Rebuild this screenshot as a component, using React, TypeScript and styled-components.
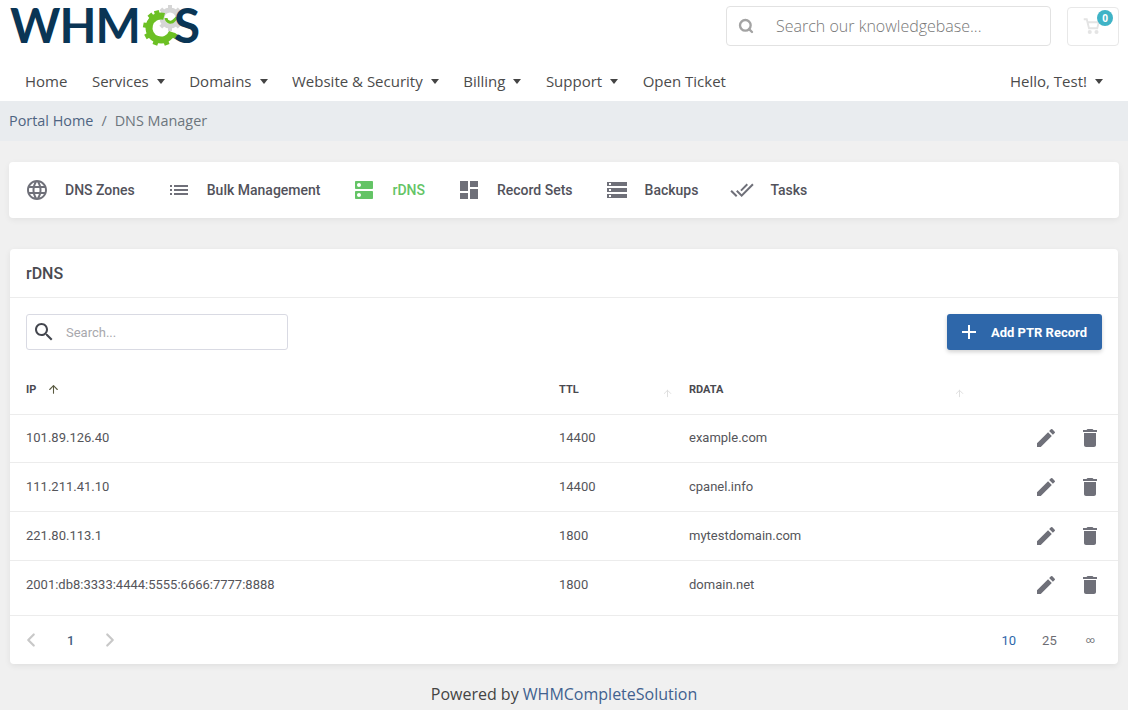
import React from "react";
import styled, { createGlobalStyle } from "styled-components";
import { Search, ArrowUp, ChevronLeft, ChevronRight } from "lucide-react";

const GlobalStyle = createGlobalStyle`
  html, body {
    margin: 0;
    padding: 0;
    background: #f0f0f0;
    font-family: "Open Sans", sans-serif;
    color: #444;
  }
  * { box-sizing: border-box; }
`;

const Page = styled.div`
  width: 1128px;
  height: 710px;
  overflow: hidden;
`;

const Header = styled.header`
  background: #fff;
  height: 101px;
`;

const TopRow = styled.div`
  height: 64px;
  display: flex;
  align-items: flex-start;
  padding: 6px 9px 0 10px;
`;

const Logo = styled.div`
  display: flex;
  align-items: center;
  height: 48px;
  margin-top: -5px;
  font-family: "Lato", sans-serif;
  font-size: 48px;
  font-weight: 700;
  color: #0a3555;
  line-height: 48px;
  letter-spacing: -1px;
`;

const LogoGear = styled.svg`
  width: 42px;
  height: 42px;
  flex: none;
`;

const LogoLetter = styled.span`
  margin-left: -8px;
`;

const KbSearch = styled.div`
  margin-left: auto;
  width: 325px;
  height: 40px;
  border: 1px solid #e2e2e2;
  border-radius: 4px;
  display: flex;
  align-items: center;
  padding-left: 11px;
  font-size: 16px;
  font-weight: 300;
  color: #777;
`;

const KbSearchText = styled.span`
  margin-left: 22px;
`;

const CartButton = styled.div`
  position: relative;
  width: 52px;
  height: 39px;
  margin: 1px 0 0 16px;
  border: 1px solid #e8e8e8;
  border-radius: 4px;
  padding: 9px 0 0 15px;
`;

const CartBadge = styled.span`
  position: absolute;
  top: 2px;
  right: 5px;
  width: 16px;
  height: 16px;
  border-radius: 50%;
  background: #3fb3c6;
  color: #fff;
  font-size: 10px;
  font-weight: 700;
  line-height: 16px;
  text-align: center;
`;

const Nav = styled.nav`
  height: 37px;
  display: flex;
  align-items: center;
  padding: 0 25px 4px 25px;
  gap: 24.5px;
  font-size: 15px;
  color: #4b4b4b;
`;

const NavItem = styled.span<{ $last?: boolean }>`
  display: flex;
  align-items: center;
  gap: 8px;
  margin-left: ${({ $last }) => ($last ? "auto" : "0")};
`;

const Caret = styled.i`
  width: 0;
  height: 0;
  margin-top: 2px;
  border-left: 4.8px solid transparent;
  border-right: 4.8px solid transparent;
  border-top: 5px solid #444;
`;

const Breadcrumb = styled.div`
  height: 40px;
  background: #e9ecef;
  display: flex;
  align-items: center;
  padding: 0 0 2px 9px;
  font-size: 14.4px;
  color: #6c757d;
  gap: 8px;
`;

const CrumbLink = styled.span`
  color: #4f6482;
`;

const Content = styled.main`
  padding: 21px 9px 0;
`;

const TabsCard = styled.div`
  height: 56px;
  background: #fff;
  border-radius: 4px;
  box-shadow: 0 2px 6px rgba(0, 0, 0, 0.06);
  display: flex;
  align-items: center;
  padding-left: 16px;
  gap: 32px;
`;

const Tab = styled.div<{ $active?: boolean }>`
  display: flex;
  align-items: center;
  gap: 16px;
  font-family: "Roboto", sans-serif;
  font-size: 14px;
  font-weight: 500;
  color: ${({ $active }) => ($active ? "#64c466" : "#52525b")};
`;

const MatIcon = styled.svg`
  width: 24px;
  height: 24px;
  display: block;
  flex: none;
  fill: currentColor;
`;

const TabGlyph = styled.span<{ $active?: boolean }>`
  display: flex;
  color: ${({ $active }) => ($active ? "#64c466" : "#6f7079")};
`;

const Card = styled.section`
  margin: 31px 1px 0;
  height: 415px;
  background: #fff;
  border-radius: 4px;
  box-shadow: 0 2px 6px rgba(0, 0, 0, 0.07);
  font-family: "Roboto", sans-serif;
  display: flex;
  flex-direction: column;
`;

const CardHeader = styled.h2`
  margin: 0;
  height: 49px;
  padding: 0 16px;
  border-bottom: 1px solid #ececec;
  display: flex;
  align-items: center;
  font-size: 16px;
  font-weight: 500;
  color: #4a4a50;
`;

const Toolbar = styled.div`
  height: 70px;
  padding: 16px 16px 0;
  display: flex;
  justify-content: space-between;
  align-items: flex-start;
`;

const TableSearch = styled.div`
  width: 262px;
  height: 36px;
  border: 1px solid #d9dae3;
  border-radius: 3px;
  display: flex;
  align-items: center;
  padding-left: 5px;
  gap: 10px;
  font-size: 13px;
  color: #a8a8ad;
`;

const SearchGlyph = styled.span`
  display: flex;
  color: #44474f;
`;

const AddButton = styled.button`
  width: 155px;
  height: 36px;
  border: 0;
  border-radius: 3px;
  background: #2e67aa;
  color: #fff;
  font-family: "Roboto", sans-serif;
  font-size: 13px;
  font-weight: 700;
  display: flex;
  align-items: center;
  padding: 0 0 0 10px;
  gap: 10px;
  box-shadow: 0 2px 4px rgba(0, 0, 0, 0.18);
`;

const Grid = styled.div`
  display: grid;
  grid-template-columns: 533px 130px 1fr 110px;
`;

const HeadRow = styled(Grid)`
  height: 47px;
  padding-left: 16px;
  align-items: center;
  font-size: 11px;
  font-weight: 700;
  color: #4a4a50;
  border-bottom: 1px solid #ececec;
`;

const HeadCell = styled.div`
  display: flex;
  align-items: center;
  position: relative;
  height: 100%;
  gap: 11px;
  padding-bottom: 3px;
`;

const SortGhost = styled.span<{ $right: number }>`
  position: absolute;
  right: ${({ $right }) => $right}px;
  top: 20px;
  color: #dcdcdc;
  display: flex;
`;

const Row = styled(Grid)<{ $plain?: boolean }>`
  height: 49px;
  padding: 0 0 2px 16px;
  align-items: center;
  font-size: 13px;
  color: #55555a;
  border-bottom: ${({ $plain }) => ($plain ? "none" : "1px solid #ececec")};

  ${HeadRow} + & {
    height: 48px;
  }
`;

const Actions = styled.div`
  display: flex;
  justify-content: flex-end;
  align-items: center;
  gap: 20px;
  padding: 1px 16px 0 0;
  color: #6f7079;
`;

const CardFooter = styled.div`
  flex: 1;
  margin-top: 5px;
  border-top: 1px solid #ececec;
  display: flex;
  align-items: center;
  justify-content: space-between;
  padding: 0 23px 0 10px;
  font-size: 13px;
  color: #6d6d72;
`;

const Pager = styled.div`
  display: flex;
  align-items: center;
  color: #c8c8c8;
  gap: 25px;
`;

const PageNumber = styled.span`
  color: #45607f;
  font-weight: 500;
`;

const PageSizes = styled.div`
  display: flex;
  align-items: center;
  gap: 26px;
`;

const PageSize = styled.span<{ $active?: boolean }>`
  color: ${({ $active }) => ($active ? "#2e67aa" : "#6d6d72")};
`;

const InfinitySize = styled.span`
  font-size: 9px;
  margin-left: 3px;
  color: #6d6d72;
`;

const Powered = styled.footer`
  text-align: center;
  font-size: 16px;
  color: #444;
  margin-top: 19px;
`;

const PoweredLink = styled.span`
  color: #41618f;
`;

const paths = {
  language:
    "M11.99 2C6.47 2 2 6.48 2 12s4.47 10 9.99 10C17.52 22 22 17.52 22 12S17.52 2 11.99 2zm6.93 6h-2.95c-.32-1.25-.78-2.45-1.38-3.56 1.84.63 3.37 1.91 4.33 3.56zM12 4.04c.83 1.2 1.48 2.53 1.91 3.96h-3.82c.43-1.43 1.08-2.76 1.91-3.96zM4.26 14C4.1 13.36 4 12.69 4 12s.1-1.36.26-2h3.38c-.08.66-.14 1.32-.14 2 0 .68.06 1.34.14 2H4.26zm.82 2h2.95c.32 1.25.78 2.45 1.38 3.56-1.84-.63-3.37-1.9-4.33-3.56zm2.95-8H5.08c.96-1.66 2.49-2.93 4.33-3.56C8.81 5.55 8.35 6.75 8.03 8zM12 19.96c-.83-1.2-1.48-2.53-1.91-3.96h3.82c-.43 1.43-1.08 2.76-1.91 3.96zM14.34 14H9.66c-.09-.66-.16-1.32-.16-2 0-.68.07-1.35.16-2h4.68c.09.65.16 1.32.16 2 0 .68-.07 1.34-.16 2zm.25 5.56c.6-1.11 1.06-2.31 1.38-3.56h2.95c-.96 1.65-2.49 2.93-4.33 3.56zM16.36 14c.08-.66.14-1.32.14-2 0-.68-.06-1.34-.14-2h3.38c.16.64.26 1.31.26 2s-.1 1.36-.26 2h-3.38z",
  list: "M3 13h2v-2H3v2zm0 4h2v-2H3v2zm0-8h2V7H3v2zm4 4h14v-2H7v2zm0 4h14v-2H7v2zM7 7v2h14V7H7z",
  dns: "M20 13H4c-.55 0-1 .45-1 1v6c0 .55.45 1 1 1h16c.55 0 1-.45 1-1v-6c0-.55-.45-1-1-1zM7 19c-1.1 0-2-.9-2-2s.9-2 2-2 2 .9 2 2-.9 2-2 2zM20 3H4c-.55 0-1 .45-1 1v6c0 .55.45 1 1 1h16c.55 0 1-.45 1-1V4c0-.55-.45-1-1-1zM7 9c-1.1 0-2-.9-2-2s.9-2 2-2 2 .9 2 2-.9 2-2 2z",
  dashboard: "M3 13h8V3H3v10zm0 8h8v-6H3v6zm10 0h8V11h-8v10zm0-18v6h8V3h-8z",
  storage:
    "M2 20h20v-4H2v4zm2-3h2v2H4v-2zM2 4v4h20V4H2zm4 3H4V5h2v2zm-4 7h20v-4H2v4zm2-3h2v2H4v-2z",
  doneAll:
    "M18 7l-1.41-1.41-6.34 6.34 1.41 1.41L18 7zm4.24-1.41L11.66 16.17 7.48 12l-1.41 1.41L11.66 19l12-12-1.42-1.41zM.41 13.41L6 19l1.41-1.41L1.83 12 .41 13.41z",
  search:
    "M15.5 14h-.79l-.28-.27C15.41 12.59 16 11.11 16 9.5 16 5.91 13.09 3 9.5 3S3 5.91 3 9.5 5.91 16 9.5 16c1.61 0 3.09-.59 4.23-1.57l.27.28v.79l5 4.99L20.49 19l-4.99-5zm-6 0C7.01 14 5 11.99 5 9.5S7.01 5 9.5 5 14 7.01 14 9.500 11.99 14 9.5 14z",
  add: "M19 13h-6v6h-2v-6H5v-2h6V5h2v6h6v2z",
  edit: "M3 17.25V21h3.75L17.81 9.94l-3.75-3.75L3 17.25zM20.71 7.04a1 1 0 0 0 0-1.41l-2.34-2.34a1 1 0 0 0-1.41 0l-1.83 1.83 3.75 3.75 1.83-1.83z",
  trash: "M6 19c0 1.1.9 2 2 2h8c1.1 0 2-.9 2-2V7H6v12zM19 4h-3.5l-1-1h-5l-1 1H5v2h14V4z",
};

const Icon = ({ d }: { d: string }) => (
  <MatIcon viewBox="0 0 24 24">
    <path d={d} />
  </MatIcon>
);

const tabs = [
  { label: "DNS Zones", icon: paths.language },
  { label: "Bulk Management", icon: paths.list },
  { label: "rDNS", icon: paths.dns, active: true },
  { label: "Record Sets", icon: paths.dashboard },
  { label: "Backups", icon: paths.storage },
  { label: "Tasks", icon: paths.doneAll },
];

const rows = [
  { ip: "101.89.126.40", ttl: "14400", rdata: "example.com" },
  { ip: "111.211.41.10", ttl: "14400", rdata: "cpanel.info" },
  { ip: "221.80.113.1", ttl: "1800", rdata: "mytestdomain.com" },
  { ip: "2001:db8:3333:4444:5555:6666:7777:8888", ttl: "1800", rdata: "domain.net" },
];

const navItems = [
  { label: "Home" },
  { label: "Services", caret: true },
  { label: "Domains", caret: true },
  { label: "Website & Security", caret: true },
  { label: "Billing", caret: true },
  { label: "Support", caret: true },
  { label: "Open Ticket" },
];

export default function App() {
  return (
    <Page>
      <GlobalStyle />
      <Header>
        <TopRow>
          <Logo>
            <span>WHM</span>
            <LogoGear viewBox="0 0 42 42">
              <g transform="translate(30 14)">
                <circle r="8" fill="none" stroke="#d6d6d6" strokeWidth="5" />
                {[0, 45, 90, 135, 180, 225, 270, 315].map((a) => (
                  <rect key={a} x="-2" y="-13" width="4" height="4" fill="#d6d6d6" transform={`rotate(${a})`} />
                ))}
                <path d="M-4 0a4.5 4.5 0 0 0 8 2.500l3 -3" fill="none" stroke="#6cc024" strokeWidth="3" />
              </g>
              <g transform="translate(21 24)">
                <path d="M11.3 4.100A12 12 0 1 1 3.100 -11.600" fill="none" stroke="#6cc024" strokeWidth="7" />
                {[120, 160, 200, 240, 280, 320, 345].map((a) => (
                  <rect key={a} x="-2.5" y="-18" width="5" height="4" fill="#6cc024" transform={`rotate(${a})`} />
                ))}
              </g>
            </LogoGear>
            <LogoLetter>S</LogoLetter>
          </Logo>
          <KbSearch>
            <Search size={16} strokeWidth={3.5} color="#a3a3a3" />
            <KbSearchText>Search our knowledgebase...</KbSearchText>
          </KbSearch>
          <CartButton>
            <svg width="18" height="18" viewBox="0 0 24 24" fill="none" stroke="#e4e4e4" strokeWidth="2.5">
              <path d="M1 3h4l3 12h11l2-8H6" />
              <circle cx="9" cy="20" r="1.5" fill="#e4e4e4" />
              <circle cx="18" cy="20" r="1.5" fill="#e4e4e4" />
            </svg>
            <CartBadge>0</CartBadge>
          </CartButton>
        </TopRow>
        <Nav>
          {navItems.map((item) => (
            <NavItem key={item.label}>
              {item.label}
              {item.caret && <Caret />}
            </NavItem>
          ))}
          <NavItem $last>
            Hello, Test!
            <Caret />
          </NavItem>
        </Nav>
      </Header>
      <Breadcrumb>
        <CrumbLink>Portal Home</CrumbLink>
        <span>/</span>
        <span>DNS Manager</span>
      </Breadcrumb>
      <Content>
        <TabsCard>
          {tabs.map((tab) => (
            <Tab key={tab.label} $active={tab.active}>
              <TabGlyph $active={tab.active}>
                <Icon d={tab.icon} />
              </TabGlyph>
              {tab.label}
            </Tab>
          ))}
        </TabsCard>
        <Card>
          <CardHeader>rDNS</CardHeader>
          <Toolbar>
            <TableSearch>
              <SearchGlyph>
                <Icon d={paths.search} />
              </SearchGlyph>
              Search...
            </TableSearch>
            <AddButton>
              <Icon d={paths.add} />
              Add PTR Record
            </AddButton>
          </Toolbar>
          <HeadRow>
            <HeadCell>
              IP
              <ArrowUp size={13} color="#5a5a40" />
            </HeadCell>
            <HeadCell>
              TTL
              <SortGhost $right={16}>
                <ArrowUp size={11} />
              </SortGhost>
            </HeadCell>
            <HeadCell>
              RDATA
              <SortGhost $right={43}>
                <ArrowUp size={11} />
              </SortGhost>
            </HeadCell>
            <div />
          </HeadRow>
          {rows.map((row, i) => (
            <Row key={row.ip} $plain={i === rows.length - 1}>
              <div>{row.ip}</div>
              <div>{row.ttl}</div>
              <div>{row.rdata}</div>
              <Actions>
                <Icon d={paths.edit} />
                <Icon d={paths.trash} />
              </Actions>
            </Row>
          ))}
          <CardFooter>
            <Pager>
              <ChevronLeft size={22} strokeWidth={2.4} />
              <PageNumber>1</PageNumber>
              <ChevronRight size={22} strokeWidth={2.4} />
            </Pager>
            <PageSizes>
              <PageSize $active>10</PageSize>
              <PageSize>25</PageSize>
              <InfinitySize>∞</InfinitySize>
            </PageSizes>
          </CardFooter>
        </Card>
        <Powered>
          Powered by <PoweredLink>WHMCompleteSolution</PoweredLink>
        </Powered>
      </Content>
    </Page>
  );
}
